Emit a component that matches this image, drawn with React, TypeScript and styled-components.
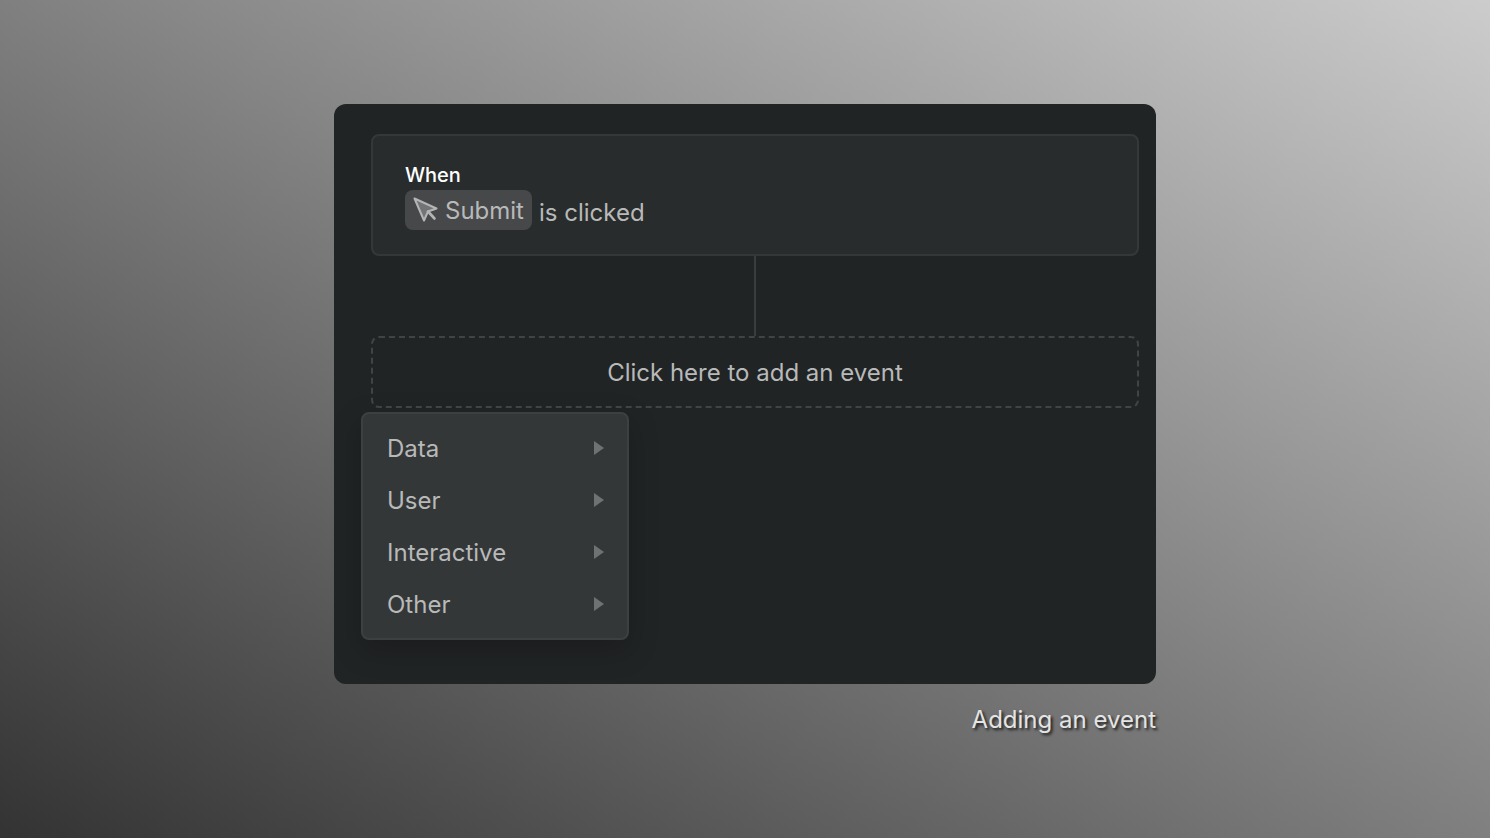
import React from "react";
import styled, { createGlobalStyle } from "styled-components";

const GlobalStyle = createGlobalStyle`
  *, *::before, *::after { box-sizing: border-box; }
  body {
    margin: 0;
    font-family: Inter, "Liberation Sans", sans-serif;
    font-size: 24px;
    line-height: 30px;
    color: #b8b9b9;
    -webkit-font-smoothing: antialiased;
  }
  button { font: inherit; color: inherit; cursor: pointer; }
`;

const Page = styled.main`
  min-height: 100vh;
  display: flex;
  align-items: center;
  justify-content: center;
  background: linear-gradient(to top right, #333, #ccc);
`;

const Figure = styled.figure`
  margin: 0;
  width: 100%;
  max-width: 822px;
`;

const Panel = styled.div`
  padding: 30px 17px 44px 27px;
  border-radius: 12px;
  background: #212425;
`;

const Flow = styled.div`
  display: flex;
  flex-direction: column;
  padding-left: 10px;
`;

const TriggerCard = styled.section`
  padding: 24px 32px;
  border: 2px solid #353839;
  border-radius: 8px;
  background: #292c2d;
`;

const TriggerTitle = styled.h2`
  margin: 0;
  font-size: 20px;
  line-height: 30px;
  font-weight: 500;
  color: #fff;
`;

const TriggerRow = styled.div`
  display: flex;
  align-items: center;
  gap: 7px;
`;

const TargetChip = styled.button`
  display: flex;
  align-items: center;
  gap: 6px;
  height: 40px;
  padding: 0 8px;
  border: 0;
  border-radius: 8px;
  background: #474849;
`;

const Label = styled.span`
  padding-top: 2px;
`;

const Condition = styled.span`
  padding-top: 6px;
`;

const Connector = styled.div`
  align-self: center;
  width: 2px;
  height: 80px;
  background: #3a3d3e;
`;

const AddEvent = styled.button`
  padding: 20px 20px 18px;
  border: 2px dashed #414445;
  border-radius: 8px;
  background: transparent;
`;

const Menu = styled.div`
  width: 268px;
  margin-top: 4px;
  padding: 8px 0;
  border: 2px solid #3d4041;
  border-radius: 8px;
  background: #343738;
  box-shadow: 0 10px 30px rgba(0, 0, 0, 0.22);
`;

const MenuItem = styled.button`
  display: flex;
  align-items: center;
  justify-content: space-between;
  width: 100%;
  height: 52px;
  padding: 0 23px 0 24px;
  border: 0;
  background: transparent;
  text-align: left;
`;

const Caption = styled.figcaption`
  padding-top: 22px;
  line-height: 28px;
  text-align: right;
  color: #e4e4e4;
  text-shadow: 2px 2px 3px rgba(0, 0, 0, 0.8);
`;

const CursorIcon = () => (
  <svg width="26" height="26" viewBox="0 0 26 26" aria-hidden="true">
    <path
      d="M1.5 1.5 L23.5 11.5 L15 14.5 L11 23.5 Z"
      fill="#737475"
      stroke="#b4b5b5"
      strokeWidth="2"
      strokeLinejoin="round"
    />
    <path d="M15 14.5 L21.5 21.5" stroke="#b4b5b5" strokeWidth="2.6" strokeLinecap="round" />
  </svg>
);

const SubmenuArrow = () => (
  <svg width="10" height="14" viewBox="0 0 10 14" aria-hidden="true">
    <path d="M0 0 L10 7 L0 14 Z" fill="#6f7273" />
  </svg>
);

const categories = ["Data", "User", "Interactive", "Other"];

export default function App() {
  return (
    <>
      <GlobalStyle />
      <Page>
        <Figure>
          <Panel>
            <Flow>
              <TriggerCard>
                <TriggerTitle>When</TriggerTitle>
                <TriggerRow>
                  <TargetChip type="button">
                    <CursorIcon />
                    <Label>Submit</Label>
                  </TargetChip>
                  <Condition>is clicked</Condition>
                </TriggerRow>
              </TriggerCard>
              <Connector />
              <AddEvent type="button">Click here to add an event</AddEvent>
            </Flow>
            <Menu role="menu" aria-label="Event categories">
              {categories.map((name) => (
                <MenuItem key={name} type="button" role="menuitem">
                  <Label>{name}</Label>
                  <SubmenuArrow />
                </MenuItem>
              ))}
            </Menu>
          </Panel>
          <Caption>Adding an event</Caption>
        </Figure>
      </Page>
    </>
  );
}
